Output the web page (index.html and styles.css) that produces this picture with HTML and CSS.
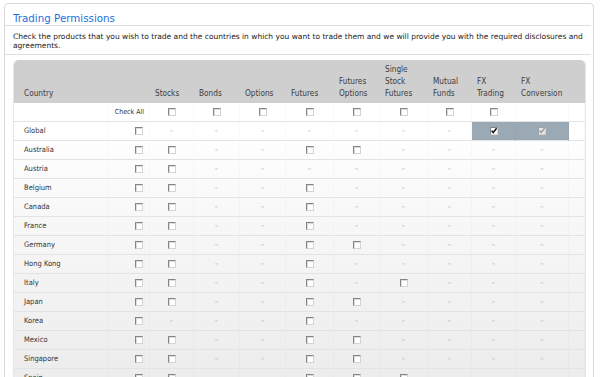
FILE: index.html
```html
<!DOCTYPE html>
<html lang="en">
<head>
<meta charset="utf-8">
<title>Trading Permissions</title>
<link rel="stylesheet" href="styles.css">
</head>
<body>
<div class="panel">
  <h1 class="title">Trading Permissions</h1>
  <p class="desc">Check the products that you wish to trade and the countries in which you want to trade them and we will provide you with the required disclosures and agreements.</p>
  <div class="grid-wrap">
    <table class="perm">
      <colgroup>
        <col class="c-country"><col class="c-chk"><col class="c-44"><col class="c-46"><col class="c-46"><col class="c-48"><col class="c-46"><col class="c-48"><col class="c-44"><col class="c-44"><col class="c-53"><col class="c-pad">
      </colgroup>
      <thead>
        <tr>
          <th class="first">Country</th>
          <th></th>
          <th>Stocks</th>
          <th>Bonds</th>
          <th>Options</th>
          <th>Futures</th>
          <th>Futures<br>Options</th>
          <th>Single<br>Stock<br>Futures</th>
          <th>Mutual<br>Funds</th>
          <th>FX<br>Trading</th>
          <th>FX<br>Conversion</th>
          <th class="last"></th>
        </tr>
      </thead>
      <tbody>
        <tr class="checkall">
          <td></td>
          <td class="chk"><span class="all">Check All</span></td>
          <td><span class="cb"></span></td>
          <td><span class="cb"></span></td>
          <td><span class="cb"></span></td>
          <td><span class="cb"></span></td>
          <td><span class="cb"></span></td>
          <td><span class="cb"></span></td>
          <td><span class="cb"></span></td>
          <td><span class="cb"></span></td>
          <td></td>
          <td></td>
        </tr>
        <tr>
          <td class="name">Global</td>
          <td class="chk"><span class="cb"></span></td>
          <td class="na">–</td><td class="na">–</td><td class="na">–</td><td class="na">–</td><td class="na">–</td><td class="na">–</td><td class="na">–</td>
          <td class="hl"><span class="cb on"><svg viewBox="0 0 8 8" width="8" height="8"><path d="M1.6 3.6 L3.2 5.6 L6.6 1.2" fill="none" stroke="#000" stroke-width="1.4"/></svg></span></td>
          <td class="hl"><span class="cb on dis"><svg viewBox="0 0 8 8" width="8" height="8"><path d="M1.6 3.6 L3.2 5.6 L6.6 1.2" fill="none" stroke="#8d8d8d" stroke-width="1.2"/></svg></span></td>
          <td></td>
        </tr>
        <tr>
          <td class="name">Australia</td>
          <td class="chk"><span class="cb"></span></td>
          <td><span class="cb"></span></td><td class="na">–</td><td class="na">–</td><td><span class="cb"></span></td><td><span class="cb"></span></td><td class="na">–</td><td class="na">–</td><td class="na">–</td><td class="na">–</td><td></td>
        </tr>
        <tr>
          <td class="name">Austria</td>
          <td class="chk"><span class="cb"></span></td>
          <td><span class="cb"></span></td><td class="na">–</td><td class="na">–</td><td class="na">–</td><td class="na">–</td><td class="na">–</td><td class="na">–</td><td class="na">–</td><td class="na">–</td><td></td>
        </tr>
        <tr>
          <td class="name">Belgium</td>
          <td class="chk"><span class="cb"></span></td>
          <td><span class="cb"></span></td><td class="na">–</td><td class="na">–</td><td><span class="cb"></span></td><td class="na">–</td><td class="na">–</td><td class="na">–</td><td class="na">–</td><td class="na">–</td><td></td>
        </tr>
        <tr>
          <td class="name">Canada</td>
          <td class="chk"><span class="cb"></span></td>
          <td><span class="cb"></span></td><td class="na">–</td><td class="na">–</td><td><span class="cb"></span></td><td class="na">–</td><td class="na">–</td><td class="na">–</td><td class="na">–</td><td class="na">–</td><td></td>
        </tr>
        <tr>
          <td class="name">France</td>
          <td class="chk"><span class="cb"></span></td>
          <td><span class="cb"></span></td><td class="na">–</td><td class="na">–</td><td><span class="cb"></span></td><td class="na">–</td><td class="na">–</td><td class="na">–</td><td class="na">–</td><td class="na">–</td><td></td>
        </tr>
        <tr>
          <td class="name">Germany</td>
          <td class="chk"><span class="cb"></span></td>
          <td><span class="cb"></span></td><td class="na">–</td><td class="na">–</td><td><span class="cb"></span></td><td><span class="cb"></span></td><td class="na">–</td><td class="na">–</td><td class="na">–</td><td class="na">–</td><td></td>
        </tr>
        <tr>
          <td class="name">Hong Kong</td>
          <td class="chk"><span class="cb"></span></td>
          <td><span class="cb"></span></td><td class="na">–</td><td class="na">–</td><td><span class="cb"></span></td><td class="na">–</td><td class="na">–</td><td class="na">–</td><td class="na">–</td><td class="na">–</td><td></td>
        </tr>
        <tr>
          <td class="name">Italy</td>
          <td class="chk"><span class="cb"></span></td>
          <td><span class="cb"></span></td><td class="na">–</td><td class="na">–</td><td><span class="cb"></span></td><td class="na">–</td><td><span class="cb"></span></td><td class="na">–</td><td class="na">–</td><td class="na">–</td><td></td>
        </tr>
        <tr>
          <td class="name">Japan</td>
          <td class="chk"><span class="cb"></span></td>
          <td><span class="cb"></span></td><td class="na">–</td><td class="na">–</td><td><span class="cb"></span></td><td><span class="cb"></span></td><td class="na">–</td><td class="na">–</td><td class="na">–</td><td class="na">–</td><td></td>
        </tr>
        <tr>
          <td class="name">Korea</td>
          <td class="chk"><span class="cb"></span></td>
          <td class="na">–</td><td class="na">–</td><td class="na">–</td><td><span class="cb"></span></td><td class="na">–</td><td class="na">–</td><td class="na">–</td><td class="na">–</td><td class="na">–</td><td></td>
        </tr>
        <tr>
          <td class="name">Mexico</td>
          <td class="chk"><span class="cb"></span></td>
          <td><span class="cb"></span></td><td class="na">–</td><td class="na">–</td><td><span class="cb"></span></td><td><span class="cb"></span></td><td class="na">–</td><td class="na">–</td><td class="na">–</td><td class="na">–</td><td></td>
        </tr>
        <tr>
          <td class="name">Singapore</td>
          <td class="chk"><span class="cb"></span></td>
          <td><span class="cb"></span></td><td class="na">–</td><td class="na">–</td><td><span class="cb"></span></td><td><span class="cb"></span></td><td class="na">–</td><td class="na">–</td><td class="na">–</td><td class="na">–</td><td></td>
        </tr>
        <tr>
          <td class="name">Spain</td>
          <td class="chk"><span class="cb"></span></td>
          <td><span class="cb"></span></td><td class="na">–</td><td class="na">–</td><td><span class="cb"></span></td><td><span class="cb"></span></td><td><span class="cb"></span></td><td class="na">–</td><td class="na">–</td><td class="na">–</td><td></td>
        </tr>
      </tbody>
    </table>
  </div>
</div>
</body>
</html>
```

FILE: styles.css
```css
html, body {
  margin: 0;
  padding: 0;
  background: #fff;
}
body {
  font-family: "DejaVu Sans Condensed", "DejaVu Sans", sans-serif;
  color: #333;
  overflow: hidden;
}
.panel {
  margin: 3px 6px 0 4px;
  border: 1px solid #d8d8d8;
  border-radius: 4px;
  background: #fff;
  height: 400px;
}
.title {
  margin: 0 2px 0 0;
  padding: 7px 8px 0 8px;
  height: 14px;
  font-family: "DejaVu Sans", sans-serif;
  font-size: 10.3px;
  font-weight: normal;
  line-height: 14px;
  color: #1c6fdc;
  border-bottom: 1px solid #dedede;
}
.desc {
  margin: 0 2px 0 0;
  padding: 7px 3px 4px 8px;
  font-family: "DejaVu Sans", sans-serif;
  font-size: 7.5px;
  line-height: 8.5px;
  color: #222;
  border-bottom: 1px solid #dedede;
}
.grid-wrap {
  margin: 5px 7px 0 8px;
  border-radius: 5px 5px 0 0;
  border-left: 1px solid #e6e6e6;
  border-right: 1px solid #e6e6e6;
  background: linear-gradient(#ffffff 0, #ffffff 70px, #f6f6f6 180px, #ececec 320px, #e8e8e8 400px);
}
.perm {
  width: 100%;
  table-layout: fixed;
  border-collapse: separate;
  border-spacing: 0;
  font-size: 7.5px;
}
.c-country { width: 94px; }
.c-chk { width: 42px; }
.c-44 { width: 44px; }
.c-46 { width: 46px; }
.c-48 { width: 48px; }
.c-53 { width: 53px; }
.c-pad { width: auto; }
.perm th {
  background: #cfcfcf;
  color: #3d3d3d;
  font-size: 8.2px;
  font-weight: normal;
  text-align: left;
  vertical-align: bottom;
  line-height: 12px;
  height: 39px;
  padding: 0 2px 4px 5px;
  white-space: nowrap;
}
.perm th.first {
  border-top-left-radius: 5px;
  padding-left: 10px;
}
.perm th.last {
  border-top-right-radius: 5px;
}
.perm td {
  height: 18px;
  padding: 0;
  text-align: center;
  vertical-align: middle;
  border-bottom: 1px solid #e3e3e3;
  border-right: 1px solid rgba(0, 0, 0, 0.02);
  line-height: 8px;
}
.perm td.name {
  text-align: left;
  padding-left: 10px;
  color: #333;
}
.perm td.chk {
  text-align: right;
  padding-right: 6px;
}
.all {
  font-size: 7px;
  color: #333;
  white-space: nowrap;
  margin-right: -1px;
}
.perm td.na {
  color: #a4a4a4;
}
.perm td.hl {
  background: #9aa9b4;
}
.cb {
  display: inline-block;
  width: 8px;
  height: 8px;
  box-sizing: border-box;
  border: 1px solid;
  border-color: #858585 #d4d4d4 #d4d4d4 #858585;
  background: #fff;
  box-shadow: inset 1px 1px 0 #dcdcdc;
  vertical-align: middle;
  position: relative;
}
.cb svg {
  position: absolute;
  left: -1px;
  top: -1px;
}
.cb.on {
  box-shadow: none;
}
.cb.dis {
  background: #e4e4e4;
  border-color: #a0a0a0 #cfcfcf #cfcfcf #a0a0a0;
}
```
